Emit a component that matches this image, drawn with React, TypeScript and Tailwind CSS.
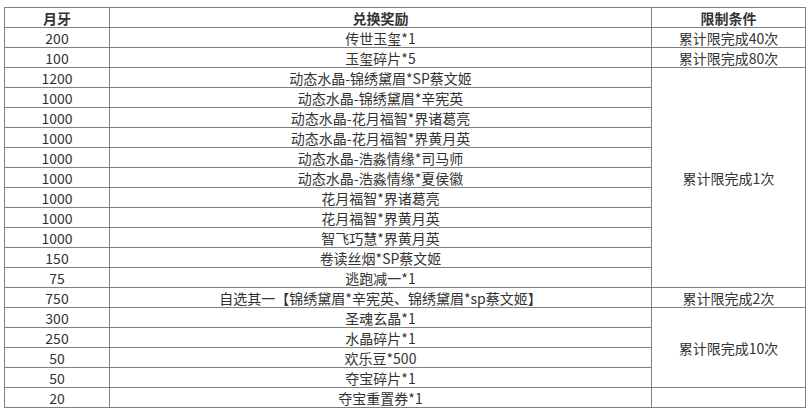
const FONT = { fontFamily: '"Microsoft YaHei", "Noto Sans CJK SC", "Noto Sans", sans-serif' }

type Row = { price: string; reward: string; limit?: string; span?: number }

const ROWS: Row[] = [
  { price: '200', reward: '传世玉玺*1', limit: '累计限完成40次' },
  { price: '100', reward: '玉玺碎片*5', limit: '累计限完成80次' },
  { price: '1200', reward: '动态水晶-锦绣黛眉*SP蔡文姬', limit: '累计限完成1次', span: 11 },
  { price: '1000', reward: '动态水晶-锦绣黛眉*辛宪英' },
  { price: '1000', reward: '动态水晶-花月福智*界诸葛亮' },
  { price: '1000', reward: '动态水晶-花月福智*界黄月英' },
  { price: '1000', reward: '动态水晶-浩淼情缘*司马师' },
  { price: '1000', reward: '动态水晶-浩淼情缘*夏侯徽' },
  { price: '1000', reward: '花月福智*界诸葛亮' },
  { price: '1000', reward: '花月福智*界黄月英' },
  { price: '1000', reward: '智飞巧慧*界黄月英' },
  { price: '150', reward: '卷读丝烟*SP蔡文姬' },
  { price: '75', reward: '逃跑减一*1' },
  { price: '750', reward: '自选其一【锦绣黛眉*辛宪英、锦绣黛眉*sp蔡文姬】', limit: '累计限完成2次' },
  { price: '300', reward: '圣魂玄晶*1', limit: '累计限完成10次', span: 4 },
  { price: '250', reward: '水晶碎片*1' },
  { price: '50', reward: '欢乐豆*500' },
  { price: '50', reward: '夺宝碎片*1' },
  { price: '20', reward: '夺宝重置券*1', limit: '' },
]

const cell = 'border border-[#808080] h-[20px] p-0 text-center align-middle leading-[18px]'

export default function App() {
  return (
    <div className="bg-white w-[807px] h-[413px] pt-[7px] pl-[4px] text-[14px] text-[#333]" style={FONT}>
      <table className="border-collapse w-[801px] table-fixed">
        <colgroup>
          <col className="w-[105px]" />
          <col className="w-[542px]" />
          <col className="w-[154px]" />
        </colgroup>
        <thead>
          <tr>
            <th className={`${cell} font-bold`}>月牙</th>
            <th className={`${cell} font-bold`}>兑换奖励</th>
            <th className={`${cell} font-bold`}>限制条件</th>
          </tr>
        </thead>
        <tbody>
          {ROWS.map((r, i) => (
            <tr key={i}>
              <td className={cell}>{r.price}</td>
              <td className={cell}>{r.reward}</td>
              {r.limit !== undefined && (
                <td className={cell} rowSpan={r.span ?? 1}>
                  {r.limit}
                </td>
              )}
            </tr>
          ))}
        </tbody>
      </table>
    </div>
  )
}
